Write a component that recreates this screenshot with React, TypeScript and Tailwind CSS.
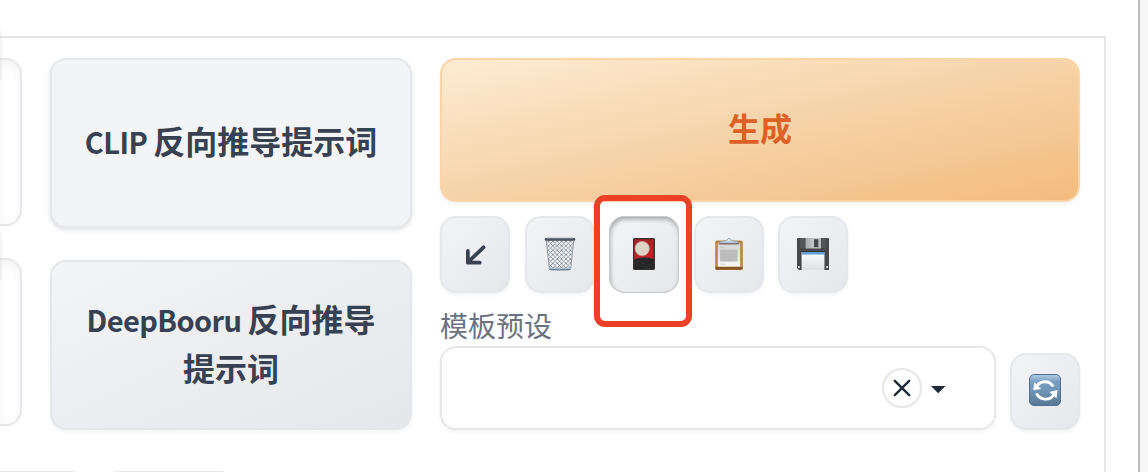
import type { ReactNode } from "react";

function ArrowIcon() {
  return (
    <svg className="mt-0.5" width="21" height="21" viewBox="0 0 22 22" fill="none" stroke="#374151" strokeWidth="3.9" strokeLinecap="round" strokeLinejoin="round">
      <path d="M19.4 2.4 3.4 17.8M3 6.200v12.3H15.4" />
    </svg>
  );
}

function TrashIcon() {
  return (
    <svg className="ml-px" width="32" height="34" viewBox="0 0 32 34" fill="none">
      <defs>
        <pattern id="mesh" width="4.4" height="4.4" patternUnits="userSpaceOnUse">
          <path d="M0 0 4.4 4.4M4.4 0 0 4.4" stroke="#707986" strokeWidth="0.75" />
        </pattern>
      </defs>
      <path d="M2.2 3h27.6l-3.1 28.5q-.2 1.3-1.6 1.3H6.9q-1.4 0-1.6-1.3z" fill="#f4f6f8" />
      <path d="M2.2 3h27.6l-3.1 28.5q-.2 1.3-1.6 1.3H6.9q-1.4 0-1.6-1.3z" fill="url(#mesh)" stroke="#8793a0" strokeWidth="0.9" />
      <path d="M5 30.500h22l-.5 1.700q-10 1.6-21 0z" fill="#a9bacb" />
      <path d="M5.6 32.6q10 .8 20.8 0" stroke="#64758a" strokeWidth="1" />
      <rect x="0.7" y="1" width="30.6" height="2.8" rx="1.2" fill="#4c525c" />
      <path d="M3 1.2h26" stroke="#8595a6" strokeWidth="0.9" />
    </svg>
  );
}

function CardIcon() {
  return (
    <svg width="22" height="32" viewBox="0 0 22 32">
      <defs>
        <linearGradient id="cardRed" x1="0" y1="0" x2="0" y2="1">
          <stop offset="0" stopColor="#a92025" />
          <stop offset="1" stopColor="#d2232a" />
        </linearGradient>
      </defs>
      <rect x="0.6" y="0.6" width="20.8" height="30.8" rx="1.6" fill="url(#cardRed)" stroke="#34302f" strokeWidth="1.4" />
      <path d="M1.1 22.2Q4 19.6 10.5 19.6T20.9 21v8.8q0 1.1-1 1.1H2q-.9 0-.9-1.1z" fill="#252626" />
      <path d="M2 25q5-4 9 1t9-1M2 29q5-4 9 0t9-1" stroke="#393b3b" strokeWidth="0.7" fill="none" />
      <circle cx="9.2" cy="10.6" r="7.2" fill="#dfd3c4" stroke="#bea496" strokeWidth="0.7" />
    </svg>
  );
}

function ClipboardIcon() {
  return (
    <svg className="ml-px" width="28" height="32" viewBox="0 0 28 32" fill="none">
      <defs>
        <linearGradient id="paper" x1="0" y1="0" x2="0" y2="1">
          <stop offset="0" stopColor="#d2d3d3" />
          <stop offset="1" stopColor="#f7f7f7" />
        </linearGradient>
      </defs>
      <rect x="0.2" y="2.5" width="27.6" height="29.3" rx="1.8" fill="#b88645" />
      <path d="M.3 29h27.4v1.2q0 1.6-1.6 1.6H1.9Q.3 31.800.3 30.2z" fill="#865724" />
      <path d="M2.8 5.400h22.4v23.200H2.800z" fill="url(#paper)" />
      <path d="M5 11.500h17.500v12H5z" fill="#bebebe" />
      <path d="M5.500 9.500h4M6 13h14M6 16h15M6 19h15M6 22h12M5.500 26.200h5" stroke="#b0b0b0" strokeWidth=".5" />
      <path d="M4.400 5.200q.4-1.700 3-1.900 3.300-.1 4.200-1.100.9-1.700 2.400-1.700t2.400 1.700q.9 1 4.200 1.100 2.600.2 3 1.900z" fill="#c4d0df" stroke="#8c99ab" strokeWidth=".7" />
      <path d="M4.200 5.800h19.600" stroke="#7b6867" strokeWidth="1.300" />
      <circle cx="14" cy="2" r=".8" fill="#eef1f5" />
    </svg>
  );
}

function FloppyIcon() {
  return (
    <svg width="32" height="32" viewBox="0 0 32 32">
      <defs>
        <linearGradient id="metal">
          <stop offset="0" stopColor="#a7a9aa" />
          <stop offset=".6" stopColor="#c9cacb" />
          <stop offset="1" stopColor="#b4b6b7" />
        </linearGradient>
        <linearGradient id="disk" x1="0" y1="0" x2="0" y2="1">
          <stop offset="0" stopColor="#ffffff" />
          <stop offset="1" stopColor="#dedfe2" />
        </linearGradient>
      </defs>
      <path d="M0 1q0-1 1-1h30q1 0 1 1v30.500q0 .5-.5.500H2L0 30z" fill="#46484a" />
      <path d="M3 0v10h5V0zM24 0v10h5V0z" fill="#525456" />
      <path d="M8.500 0H24v10.500H8.500z" fill="url(#metal)" />
      <path d="M17 1.200h4.300v8H17z" fill="#444648" />
      <path d="M3.700 13h24.200v19H3.700z" fill="#323436" />
      <path d="M4.500 14h23v18h-23z" fill="url(#disk)" />
      <path d="M4.500 14h23v2.600h-23z" fill="#649fd9" />
      <path d="M1 28h1.800v2H1zM29.200 28H31v2h-1.800z" fill="#dddedf" />
    </svg>
  );
}

function RefreshIcon() {
  return (
    <svg width="32" height="32" viewBox="0 0 32 32" fill="none">
      <defs>
        <linearGradient id="blue" x1="0" y1="0" x2="0" y2="1">
          <stop offset="0" stopColor="#b4cee4" />
          <stop offset=".22" stopColor="#789fc4" />
          <stop offset=".6" stopColor="#6c91b2" />
          <stop offset="1" stopColor="#587693" />
        </linearGradient>
      </defs>
      <rect x=".5" y=".5" width="31" height="31" rx="4.500" fill="url(#blue)" stroke="#53718e" />
      <path d="M7.500 13C10.500 6.400 20.500 5.600 24.200 12.700M7.500 19.400C11 26.900 21.500 26.900 24.900 20.300" stroke="#fff" strokeWidth="2.900" />
      <path d="m5.200 8-.9 8.200 7.800-1.300zM28.400 16l-8 2 7.100 6.300z" fill="#fff" />
    </svg>
  );
}

const toolBase = "flex h-[77px] w-[70px] shrink-0 items-center justify-center rounded-[16px] bg-linear-to-br from-[#f3f4f6] to-[#e5e7eb]";

function Tool({ children, pressed = false, label, pad = "pb-px" }: { children: ReactNode; pressed?: boolean; label: string; pad?: string }) {
  return (
    <button
      aria-label={label}
      className={`${toolBase} ${pad} ${pressed ? "shadow-[inset_0_0_0_1px_#c9c9cc,inset_1px_3px_5px_#00000055]" : "border-2 border-[#e5e7eb] shadow-[0_2px_4px_#0000000d]"}`}
    >
      {children}
    </button>
  );
}

export default function App() {
  return (
    <div className="relative flex h-[472px] w-[1148px] overflow-hidden bg-white pt-9 font-['Noto_Sans_CJK_SC',sans-serif]">
      <main className="flex h-[500px] w-[1106px] shrink-0 flex-col border-t-2 border-r-2 border-[#e5e7eb] pt-5">
        <div className="flex">
          <div className="flex w-[22px] flex-col gap-8">
            <div className="h-[168px] rounded-r-[16px] border-2 border-l-0 border-[#e5e7eb] shadow-[inset_0_4px_8px_#0000000d]" />
            <div className="h-[168px] rounded-r-[16px] border-2 border-l-0 border-[#e5e7eb] shadow-[inset_0_4px_8px_#0000000d]" />
          </div>
          <div className="ml-7 flex w-[362px] flex-col gap-8 text-[32px] leading-[48px] font-bold text-[#374151]">
            <button className="h-[170px] rounded-[16px] border-2 border-[#e5e7eb] bg-[#f3f4f6] pb-[5px] shadow-[0_2px_6px_#00000014,0_2px_3px_#0000000f]">
              <span className="text-[29px] tracking-[-0.6px]">CLIP </span>反向推导提示词
            </button>
            <button className="h-[170px] rounded-[16px] border-2 border-[#e5e7eb] bg-linear-to-br from-[#f3f4f6] to-[#e5e7eb] pb-[5px] whitespace-nowrap shadow-[0_2px_4px_#0000000d]">
              <span className="text-[29px] tracking-[-0.6px]">DeepBooru </span>反向推导<br />提示词
            </button>
          </div>
          <div className="ml-7 flex w-[640px] flex-col">
            <button className="h-36 rounded-[16px] border-2 border-[#f9d5a7] bg-linear-to-br from-[#fdecd3] via-[#f6d3a8] to-[#f3bb7d] pb-1.5 text-[32px] leading-[48px] font-bold text-[#dd6127] shadow-[0_2px_4px_#0000000d]">
              生成
            </button>
            <div className="mt-3.5 flex gap-[14.5px]">
              <Tool label="Read"><ArrowIcon /></Tool>
              <Tool label="Clear"><TrashIcon /></Tool>
              <Tool label="Extra networks" pressed><CardIcon /></Tool>
              <Tool label="Apply"><ClipboardIcon /></Tool>
              <Tool label="Save"><FloppyIcon /></Tool>
            </div>
            <div className="mt-3 h-[41px] text-[28px] leading-[41px] text-[#6b7280]">模板预设</div>
            <div className="flex h-[84px] items-end gap-3.5">
              <div className="flex h-[84px] w-[556px] items-center justify-end rounded-[16px] border-2 border-[#e5e7eb] bg-white pr-12 shadow-[0_2px_4px_#0000000d]">
                <button aria-label="Clear selection" className="flex size-10 items-center justify-center rounded-full border-2 border-[#e5e7eb]">
                  <svg width="18" height="18" viewBox="0 0 18 18" stroke="#1f2937" strokeWidth="2.400" strokeLinecap="round">
                    <path d="m1.800 1.800 14.400 14.400M16.200 1.800 1.800 16.200" />
                  </svg>
                </button>
                <svg className="mt-1 ml-[9px]" width="15" height="8" viewBox="0 0 15 8" fill="#1f2937"><path d="M0 0h14.500L7.200 7.200z" /></svg>
              </div>
              <Tool label="Refresh" pad="pb-[3px]"><RefreshIcon /></Tool>
            </div>
          </div>
        </div>
        <div className="mt-[41px] flex shrink-0 gap-4">
          <div className="h-12 w-[86px] rounded-tr-[16px] border-t-2 border-[#e5e7eb]" />
          <div className="h-12 w-[134px] rounded-t-[16px] border-t-2 border-[#e5e7eb]" />
        </div>
      </main>
      <div className="-mt-9 ml-8 h-[472px] w-2.5 shrink-0 border-l-2 border-[#bbbbbb] bg-[#f6f6f6]" />
      <div className="absolute top-[30px] left-0 h-[50px] w-0.5 rounded-r-sm bg-black/4" />
      <div className="absolute top-[232px] left-0 h-[48px] w-0.5 rounded-r-sm bg-black/4" />
      <div className="absolute top-[195px] left-[594px] h-[132px] w-[98px] rounded-[11px] border-[6px] border-[#ed4127]" />
    </div>
  );
}
